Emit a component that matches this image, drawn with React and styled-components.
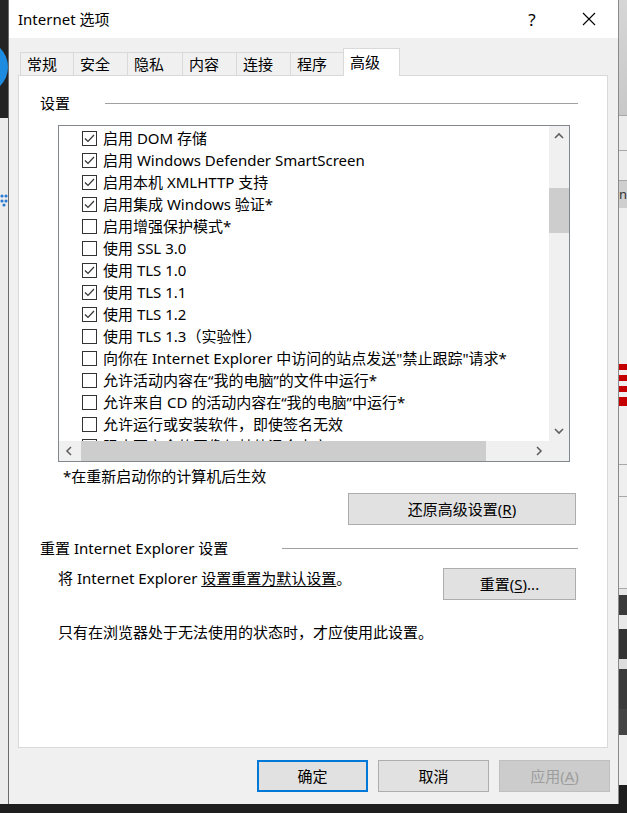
import React from 'react';
import styled, { createGlobalStyle } from 'styled-components';

const GlobalStyle = createGlobalStyle`
  body {
    margin: 0;
    background: #1e1e1e;
    font-family: "Segoe UI", "Noto Sans", "Noto Sans CJK SC", sans-serif;
    color: #000;
  }
  * { box-sizing: border-box; }
`;

const Desktop = styled.div`
  width: 627px;
  height: 813px;
  display: flex;
  flex-direction: column;
  overflow: hidden;
  background: #1e1e1e;
`;

const Main = styled.div`
  display: flex;
  height: 804px;
`;

const SideStrip = styled.div`
  width: 8px;
  flex: none;
  display: flex;
  flex-direction: column;
  overflow: hidden;
`;

const Band = styled.div`
  height: ${(p) => p.$h}px;
  flex: ${(p) => (p.$grow ? 1 : 'none')};
  background: ${(p) => p.$bg};
  border-bottom: ${(p) => (p.$line ? '1px solid #a8a8a8' : 'none')};
  overflow: hidden;
  font-size: 13px;
  line-height: ${(p) => p.$h}px;
  color: #333;
`;

const DarkTop = styled.div`
  height: 118px;
  flex: none;
  background: #242424;
  padding-top: 40px;
`;

const BlueDisc = styled.div`
  width: 54px;
  height: 54px;
  margin-left: -46px;
  border-radius: 50%;
  background: #1d8ce0;
`;

const LightSide = styled.div`
  flex: 1;
  background: #ececec;
  padding-top: 72px;
`;

const Window = styled.div`
  width: 611px;
  height: 804px;
  flex: none;
  display: flex;
  flex-direction: column;
  background: #f0f0f0;
  border-left: 1px solid #6b6b6b;
  border-right: 1px solid #8a8a8a;
`;

const TitleBar = styled.div`
  height: 38px;
  background: #fff;
  display: flex;
  align-items: center;
  padding-left: 9px;
`;

const Title = styled.div`
  font-size: 15px;
  padding-bottom: 1px;
`;

const TitleButtons = styled.div`
  margin-left: auto;
  margin-right: 6px;
  display: flex;
  gap: 11px;
`;

const CaptionButton = styled.div`
  width: 46px;
  height: 38px;
  display: flex;
  align-items: center;
  justify-content: center;
  font-size: 17px;
  font-family: "Noto Sans", sans-serif;
`;

const Body = styled.div`
  padding: 10px 10px 0 9px;
  display: flex;
  flex-direction: column;
`;

const TabStrip = styled.div`
  display: flex;
  align-items: flex-end;
  height: 28px;
  margin-bottom: -1px;
  padding-left: 2px;
  position: relative;
  z-index: 1;
`;

const Tab = styled.div`
  width: ${(p) => p.$w}px;
  height: ${(p) => (p.$active ? 28 : 24)}px;
  margin-left: -1px;
  padding: 0 0 2px 6px;
  display: flex;
  align-items: center;
  font-size: 15px;
  background: ${(p) => (p.$active ? '#fff' : '#f0f0f0')};
  border: 1px solid #d9d9d9;
  border-bottom: ${(p) => (p.$active ? 'none' : '1px solid #d9d9d9')};
  &:first-child { margin-left: 0; }
`;

const Panel = styled.div`
  height: 673px;
  background: #fff;
  border: 1px solid #d9d9d9;
  padding: 17px 29px 0 21px;
  display: flex;
  flex-direction: column;
`;

const GroupHeader = styled.div`
  display: flex;
  align-items: center;
  height: 20px;
  margin-top: ${(p) => p.$top || 0}px;
`;

const GroupLabel = styled.div`
  width: ${(p) => p.$w}px;
  font-size: 15px;
  white-space: nowrap;
  padding-bottom: 1px;
`;

const GroupRule = styled.div`
  flex: 1;
  height: 1px;
  background: #a0a0a0;
`;

const ListBox = styled.div`
  margin: 12px 8px 0 18px;
  height: 337px;
  border: 1px solid #828790;
  display: grid;
  grid-template-columns: 1fr 20px;
  grid-template-rows: 1fr 20px;
`;

const ItemList = styled.div`
  overflow: hidden;
  padding-top: 1px;
  background: #fff;
`;

const Item = styled.div`
  display: flex;
  align-items: center;
  gap: 6px;
  height: 22px;
  padding-left: 23px;
  font-size: 15px;
  white-space: nowrap;
`;

const ItemLabel = styled.span`
  padding-bottom: 1px;
`;

const Box = styled.div`
  width: 15px;
  height: 15px;
  flex: none;
  border: 1px solid #333;
  background: #fff;
  display: flex;
  align-items: center;
  justify-content: center;
`;

const VScroll = styled.div`
  background: #f0f0f0;
  display: flex;
  flex-direction: column;
`;

const HScroll = styled.div`
  background: #f0f0f0;
  display: flex;
`;

const ScrollButton = styled.div`
  width: 20px;
  height: 20px;
  flex: none;
  display: flex;
  align-items: center;
  justify-content: center;
`;

const Thumb = styled.div`
  background: #cdcdcd;
  flex: none;
  ${(p) =>
    p.$vertical
      ? `width: 100%; height: ${p.$size}px; margin-top: ${p.$offset}px;`
      : `height: 100%; width: ${p.$size}px; margin-left: ${p.$offset}px;`}
`;

const Spacer = styled.div`
  flex: 1;
`;

const Corner = styled.div`
  background: #f0f0f0;
`;

const Footnote = styled.div`
  margin: 4px 0 0 23px;
  font-size: 15px;
  line-height: 20px;
`;

const RightRow = styled.div`
  display: flex;
  justify-content: flex-end;
  margin-top: 7px;
  padding-right: 2px;
`;

const Button = styled.div`
  width: ${(p) => p.$w}px;
  height: 32px;
  flex: none;
  display: flex;
  align-items: center;
  justify-content: center;
  font-size: 15px;
  padding-bottom: 1px;
  background: ${(p) => (p.$disabled ? '#cccccc' : '#e1e1e1')};
  color: ${(p) => (p.$disabled ? '#9d9d9d' : '#000')};
  border: ${(p) =>
    p.$default ? '2px solid #0078d7' : p.$disabled ? '1px solid #bfbfbf' : '1px solid #adadad'};
`;

const U = styled.span`
  text-decoration: underline;
  text-underline-offset: 2px;
`;

const ResetRow = styled.div`
  display: flex;
  justify-content: space-between;
  align-items: flex-start;
  margin-top: 10px;
  padding: 0 2px 0 18px;
`;

const Text = styled.div`
  font-size: 15px;
  line-height: 20px;
  white-space: nowrap;
  margin-top: ${(p) => p.$top || 0}px;
  padding-left: ${(p) => p.$indent || 0}px;
`;

const Footer = styled.div`
  display: flex;
  justify-content: flex-end;
  gap: 10px;
  padding: 12px 8px 0 0;
`;

const Chevron = ({ dir }) => {
  const pts = {
    up: '1,6 5,2 9,6',
    down: '1,2 5,6 9,2',
    left: '6,1 2,5 6,9',
    right: '2,1 6,5 2,9',
  }[dir];
  const vertical = dir === 'up' || dir === 'down';
  return (
    <svg width={vertical ? 10 : 8} height={vertical ? 8 : 10} viewBox={vertical ? '0 0 10 8' : '0 0 8 10'}>
      <polyline points={pts} fill="none" stroke="#606060" strokeWidth="1.6" />
    </svg>
  );
};

const Check = () => (
  <svg width="13" height="13" viewBox="0 0 13 13">
    <polyline points="2,6.5 5,9.5 11,3" fill="none" stroke="#333" strokeWidth="1.2" />
  </svg>
);

const CloseIcon = () => (
  <svg width="14" height="14" viewBox="0 0 14 14">
    <path d="M1 1 L13 13 M13 1 L1 13" stroke="#000" strokeWidth="1.1" />
  </svg>
);

const tabs = [
  ['常规', 54],
  ['安全', 55],
  ['隐私', 56],
  ['内容', 55],
  ['连接', 55],
  ['程序', 54],
  ['高级', 57],
];

const options = [
  [true, '启用 DOM 存储'],
  [true, '启用 Windows Defender SmartScreen'],
  [true, '启用本机 XMLHTTP 支持'],
  [true, '启用集成 Windows 验证*'],
  [false, '启用增强保护模式*'],
  [false, '使用 SSL 3.0'],
  [true, '使用 TLS 1.0'],
  [true, '使用 TLS 1.1'],
  [true, '使用 TLS 1.2'],
  [false, '使用 TLS 1.3（实验性）'],
  [false, '向你在 Internet Explorer 中访问的站点发送"禁止跟踪"请求*'],
  [false, '允许活动内容在“我的电脑”的文件中运行*'],
  [false, '允许来自 CD 的活动内容在“我的电脑”中运行*'],
  [false, '允许运行或安装软件，即使签名无效'],
  [false, '阻止不安全的图像与其他混合内容'],
];

const rightBands = [
  { h: 116, bg: 'linear-gradient(#d6d6d6, #c8c8c8)', line: true },
  { h: 35, bg: '#ececec', line: true },
  { h: 30, bg: '#ececec', line: true },
  { h: 27, bg: '#cfcfcf', text: 'ng' },
  { h: 156, bg: '#efefef' },
  { h: 6, bg: '#c40000' },
  { h: 5, bg: '#efefef' },
  { h: 6, bg: '#c40000' },
  { h: 5, bg: '#efefef' },
  { h: 6, bg: '#c40000' },
  { h: 5, bg: '#efefef' },
  { h: 9, bg: '#c40000' },
  { h: 59, bg: '#efefef', line: true },
  { h: 32, bg: '#efefef', line: true },
  { h: 92, bg: '#efefef', line: true },
  { h: 6, bg: '#e6e6e6' },
  { h: 20, bg: '#3a3a3a' },
  { h: 14, bg: '#e8e8e8' },
  { h: 30, bg: '#333' },
  { h: 10, bg: '#dcdcdc' },
  { h: 40, bg: '#3a3a3a' },
  { h: 26, bg: '#444' },
  { h: 50, bg: '#eeeeee' },
  { grow: true, bg: '#1e1e1e' },
];

export default function App() {
  return (
    <>
      <GlobalStyle />
      <Desktop>
        <Main>
          <SideStrip>
            <DarkTop>
              <BlueDisc />
            </DarkTop>
            <LightSide>
              <svg width="8" height="14" viewBox="0 0 8 14">
                <circle cx="2" cy="3" r="1.6" fill="#2a7bd6" />
                <circle cx="6" cy="3" r="1.6" fill="#2a7bd6" />
                <circle cx="2" cy="8" r="1.6" fill="#2a7bd6" />
                <circle cx="6" cy="8" r="1.6" fill="#2a7bd6" />
                <circle cx="4" cy="12" r="1.6" fill="#2a7bd6" />
              </svg>
            </LightSide>
          </SideStrip>

          <Window>
            <TitleBar>
              <Title>Internet 选项</Title>
              <TitleButtons>
                <CaptionButton>?</CaptionButton>
                <CaptionButton>
                  <CloseIcon />
                </CaptionButton>
              </TitleButtons>
            </TitleBar>

            <Body>
              <TabStrip>
                {tabs.map(([label, w], i) => (
                  <Tab key={label} $w={w} $active={i === tabs.length - 1}>
                    {label}
                  </Tab>
                ))}
              </TabStrip>

              <Panel>
                <GroupHeader>
                  <GroupLabel $w={65}>设置</GroupLabel>
                  <GroupRule />
                </GroupHeader>

                <ListBox>
                  <ItemList>
                    {options.map(([checked, label]) => (
                      <Item key={label}>
                        <Box>{checked && <Check />}</Box>
                        <ItemLabel>{label}</ItemLabel>
                      </Item>
                    ))}
                  </ItemList>
                  <VScroll>
                    <ScrollButton>
                      <Chevron dir="up" />
                    </ScrollButton>
                    <Thumb $vertical $size={45} $offset={42} />
                    <Spacer />
                    <ScrollButton>
                      <Chevron dir="down" />
                    </ScrollButton>
                  </VScroll>
                  <HScroll>
                    <ScrollButton>
                      <Chevron dir="left" />
                    </ScrollButton>
                    <Thumb $size={405} $offset={2} />
                    <Spacer />
                    <ScrollButton>
                      <Chevron dir="right" />
                    </ScrollButton>
                  </HScroll>
                  <Corner />
                </ListBox>

                <Footnote>*在重新启动你的计算机后生效</Footnote>

                <RightRow>
                  <Button $w={228}>
                    还原高级设置(<U>R</U>)
                  </Button>
                </RightRow>

                <GroupHeader $top={13}>
                  <GroupLabel $w={242}>重置 Internet Explorer 设置</GroupLabel>
                  <GroupRule />
                </GroupHeader>

                <ResetRow>
                  <Text>
                    将 Internet Explorer <U>设置重置为默认设置</U>。
                  </Text>
                  <Button $w={133}>
                    重置(<U>S</U>)...
                  </Button>
                </ResetRow>

                <Text $top={22} $indent={18}>
                  只有在浏览器处于无法使用的状态时，才应使用此设置。
                </Text>
              </Panel>
            </Body>

            <Footer>
              <Button $w={111} $default>
                确定
              </Button>
              <Button $w={111}>取消</Button>
              <Button $w={111} $disabled>
                应用(<U>A</U>)
              </Button>
            </Footer>
          </Window>

          <SideStrip>
            {rightBands.map((b, i) => (
              <Band key={i} $h={b.h} $bg={b.bg} $line={b.line} $grow={b.grow}>
                {b.text}
              </Band>
            ))}
          </SideStrip>
        </Main>
      </Desktop>
    </>
  );
}
